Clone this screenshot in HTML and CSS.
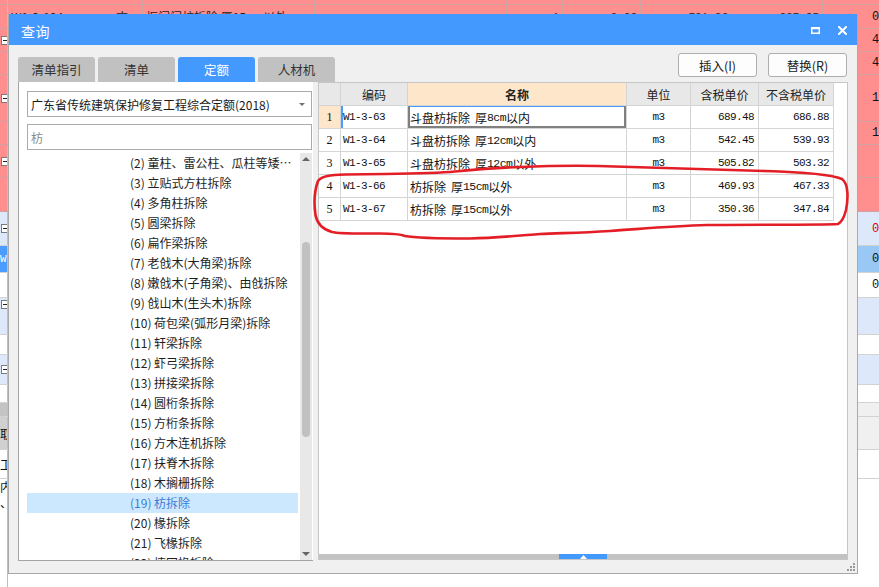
FILE: index.html
```html
<!DOCTYPE html>
<html lang="zh-CN">
<head>
<meta charset="utf-8">
<title>查询</title>
<link rel="stylesheet" href="styles.css">
</head>
<body>
<div class="sheet">
  <div class="srow pink h5"><div class="sl"></div><div class="sm cols"><span></span><span></span><span></span><span></span><span></span><span></span><span></span><span></span><span></span></div><div class="sr"></div></div>
  <div class="srow pink h24"><div class="sl"></div><div class="sm cols"><span class="t">W1-3-104</span><span class="t c">方</span><span class="t">框门门枋拆除 厚15cm以外</span><span></span><span class="t r">1</span><span class="t r">0.02</span><span class="t r">791.36</span><span class="t r">837.85</span><span></span></div><div class="sr">0</div></div>
  <div class="srow pink h23"><div class="sl"><i class="box"></i></div><div class="sm"></div><div class="sr">4</div></div>
  <div class="srow pink h23"><div class="sl"></div><div class="sm"></div><div class="sr">4</div></div>
  <div class="srow pink h47"><div class="sl"><i class="box"></i></div><div class="sm"></div><div class="sr">1</div></div>
  <div class="srow pink h23"><div class="sl"></div><div class="sm"></div><div class="sr">1</div></div>
  <div class="srow pink h33"><div class="sl"><i class="box"></i></div><div class="sm"></div><div class="sr"></div></div>
  <div class="srow pink h34"><div class="sl"></div><div class="sm"></div><div class="sr"></div></div>
  <div class="srow lb h34"><div class="sl"><i class="box"></i></div><div class="sm"></div><div class="sr red">0</div></div>
  <div class="srow wh h27"><div class="sl blue">W1</div><div class="sm"></div><div class="sr sel">0</div></div>
  <div class="srow wh h25"><div class="sl"></div><div class="sm"></div><div class="sr">0</div></div>
  <div class="srow lb h37"><div class="sl top"><i class="box"></i></div><div class="sm"></div><div class="sr"></div></div>
  <div class="srow wh h20"><div class="sl"></div><div class="sm"></div><div class="sr"></div></div>
  <div class="srow lb h30"><div class="sl"><i class="box"></i></div><div class="sm"></div><div class="sr"></div></div>
  <div class="srow wh h18"><div class="sl"></div><div class="sm"></div><div class="sr"></div></div>
  <div class="srow wh h14"><div class="sl dark"></div><div class="sm"></div><div class="sr light"></div></div>
  <div class="srow wh h33"><div class="sl gray">取</div><div class="sm"></div><div class="sr light"></div></div>
  <div class="srow wh h29"><div class="sl">工作</div><div class="sm"></div><div class="sr"></div></div>
  <div class="srow wh h108 last"><div class="sl stack"><span>内</span><span>、</span></div><div class="sm"></div><div class="sr"></div></div>
</div>

<div class="dialog">
  <div class="titlebar">
    <span class="title">查询</span>
    <div class="winbtns">
      <svg width="9" height="7" viewBox="0 0 9 7"><rect x="0.75" y="0.75" width="7.5" height="5.5" fill="none" stroke="#fff" stroke-width="1.5"/><rect x="0" y="0" width="9" height="2.2" fill="#fff"/></svg>
      <svg width="9" height="9" viewBox="0 0 9 9"><path d="M1 1L8 8M8 1L1 8" stroke="#fff" stroke-width="2" stroke-linecap="square"/></svg>
    </div>
  </div>
  <div class="dbody">
    <div class="toolbar">
      <div class="tabs">
        <div class="tab">清单指引</div>
        <div class="tab">清单</div>
        <div class="tab active">定额</div>
        <div class="tab">人材机</div>
      </div>
      <div class="btns">
        <button class="btn">插入(I)</button>
        <button class="btn">替换(R)</button>
      </div>
    </div>
    <div class="main">
      <div class="leftpanel">
        <div class="combo"><span>广东省传统建筑保护修复工程综合定额(2018)</span><i class="caret"></i></div>
        <div class="search">枋</div>
        <div class="tree">
          <ul class="items">
            <li>(2) 童柱、雷公柱、瓜柱等矮柱拆除</li>
            <li>(3) 立贴式方柱拆除</li>
            <li>(4) 多角柱拆除</li>
            <li>(5) 圆梁拆除</li>
            <li>(6) 扁作梁拆除</li>
            <li>(7) 老戗木(大角梁)拆除</li>
            <li>(8) 嫩戗木(子角梁)、由戗拆除</li>
            <li>(9) 戗山木(生头木)拆除</li>
            <li>(10) 荷包梁(弧形月梁)拆除</li>
            <li>(11) 轩梁拆除</li>
            <li>(12) 虾弓梁拆除</li>
            <li>(13) 拼接梁拆除</li>
            <li>(14) 圆桁条拆除</li>
            <li>(15) 方桁条拆除</li>
            <li>(16) 方木连机拆除</li>
            <li>(17) 扶脊木拆除</li>
            <li>(18) 木搁栅拆除</li>
            <li class="sel">(19) 枋拆除</li>
            <li>(20) 椽拆除</li>
            <li>(21) 飞椽拆除</li>
            <li>(22) 摔网椽拆除</li>
          </ul>
          <div class="vscroll">
            <div class="arrbox"><i class="arr up"></i></div>
            <div class="track"><div class="thumb"></div></div>
            <div class="arrbox"><i class="arr down"></i></div>
          </div>
        </div>
      </div>
      <div class="tablepanel">
        <div class="grid">
          <div class="c hd"></div>
          <div class="c hd ctr">编码</div>
          <div class="c hd ctr active">名称</div>
          <div class="c hd ctr">单位</div>
          <div class="c hd ctr">含税单价</div>
          <div class="c hd ctr">不含税单价</div>

          <div class="c rn cur">1</div>
          <div class="c code first">W1-3-63</div>
          <div class="c name focus">斗盘枋拆除<span class="sp"></span>厚<span class="m">8cm</span>以内</div>
          <div class="c ctr mono">m3</div>
          <div class="c num">689.48</div>
          <div class="c num">686.88</div>

          <div class="c rn">2</div>
          <div class="c code">W1-3-64</div>
          <div class="c name">斗盘枋拆除<span class="sp"></span>厚<span class="m">12cm</span>以内</div>
          <div class="c ctr mono">m3</div>
          <div class="c num">542.45</div>
          <div class="c num">539.93</div>

          <div class="c rn">3</div>
          <div class="c code">W1-3-65</div>
          <div class="c name">斗盘枋拆除<span class="sp"></span>厚<span class="m">12cm</span>以外</div>
          <div class="c ctr mono">m3</div>
          <div class="c num">505.82</div>
          <div class="c num">503.32</div>

          <div class="c rn">4</div>
          <div class="c code">W1-3-66</div>
          <div class="c name">枋拆除<span class="sp"></span>厚<span class="m">15cm</span>以外</div>
          <div class="c ctr mono">m3</div>
          <div class="c num">469.93</div>
          <div class="c num">467.33</div>

          <div class="c rn">5</div>
          <div class="c code">W1-3-67</div>
          <div class="c name">枋拆除<span class="sp"></span>厚<span class="m">15cm</span>以外</div>
          <div class="c ctr mono">m3</div>
          <div class="c num">350.36</div>
          <div class="c num">347.84</div>
        </div>
        <div class="fill"></div>
        <div class="hsplit"><div class="hthumb"><svg width="7" height="4" viewBox="0 0 7 4"><path d="M3.5 0L7 4H0Z" fill="#fff"/></svg></div></div>
      </div>
    </div>
    <div class="status">
      <svg class="grip" width="8" height="8" viewBox="0 0 8 8"><rect x="6" y="0" width="2" height="2" fill="#9a9a9a"/><rect x="3" y="3" width="2" height="2" fill="#9a9a9a"/><rect x="6" y="3" width="2" height="2" fill="#9a9a9a"/><rect x="0" y="6" width="2" height="2" fill="#9a9a9a"/><rect x="3" y="6" width="2" height="2" fill="#9a9a9a"/><rect x="6" y="6" width="2" height="2" fill="#9a9a9a"/></svg>
    </div>
  </div>
</div>

<svg class="annot" width="879" height="587" viewBox="0 0 879 587">
  <path d="M318 181 C322 176 330 175 345 174.5 L385 174 C420 173.5 440 173 455 171.5 C480 169 500 167.5 520 167 C545 166 570 165.5 598 166 C640 167 700 169.5 765 171 C800 172 830 174 842 179 C849 184 848 200 846 210 C844 218 842 222 838 224 C820 225 760 224.5 707 225 C670 226 640 229 610 231 C580 233 560 233 540 234 C515 236 495 238 470 238.5 C440 238.5 415 238 405 236 C400 234 395 233.5 380 233.5 C355 233.5 340 234 332 232 C322 229 317 224 315.5 215 C314 205 314 192 318 181" fill="none" stroke="#e41e26" stroke-width="2.6" stroke-linecap="round" stroke-linejoin="round"/>
</svg>
</body>
</html>
```

FILE: styles.css
```css
* { box-sizing: border-box; }
html, body { margin: 0; padding: 0; }
body {
  width: 879px;
  height: 587px;
  overflow: hidden;
  position: relative;
  background: #fff;
  font-family: "Noto Sans CJK SC", "Noto Sans", sans-serif;
  font-size: 12px;
  color: #1a1a1a;
}

/* ---------- background spreadsheet ---------- */
.sheet { display: flex; flex-direction: column; width: 879px; height: 587px; }
.srow { display: flex; flex: none; border-bottom: 1px solid #d2d2d2; }
.srow.pink { background: #ff8f8f; border-bottom-color: #d3a0a0; }
.srow.lb { background: #dde8fa; }
.srow.wh { background: #fff; }
.srow.last { border-bottom: 0; }
.h5 { height: 5px; } .h14 { height: 14px; } .h18 { height: 18px; } .h20 { height: 20px; }
.h23 { height: 23px; } .h24 { height: 24px; } .h25 { height: 25px; } .h27 { height: 27px; }
.h29 { height: 29px; } .h30 { height: 30px; } .h33 { height: 33px; } .h34 { height: 34px; }
.h37 { height: 37px; } .h47 { height: 47px; } .h108 { height: 108px; }

.sl {
  width: 8px; flex: none; overflow: hidden; white-space: nowrap;
  border-right: 1px solid #f2b56c;
  display: flex; align-items: center;
  font-size: 12px; color: #111;
}
.sl.top { align-items: flex-start; padding-top: 2px; }
.sl.blue { background: #4a9cff; color: #fff; font-family: "Liberation Mono", monospace; font-size: 11px; }
.sl.dark { background: #c4c4c4; }
.sl.gray { background: #d0d0d0; }
.sl.stack { flex-direction: column; align-items: flex-start; justify-content: flex-start; padding-top: 0; line-height: 16px; }
.box {
  display: block; flex: none; width: 9px; height: 9px; margin-left: 1px;
  border: 1px solid #7a7a7a; background: #fff; position: relative;
}
.box::after { content: ""; position: absolute; left: 1px; top: 3px; width: 5px; height: 1px; background: #222; }

.sm { flex: 1; }
.sm.cols { display: grid; grid-template-columns: 94px 41px 172px 192px 56px 78px 91px 91px 35px; }
.sm.cols > span { border-right: 1px solid #d3a0a0; overflow: hidden; white-space: nowrap; }
.sm .t { display: flex; align-items: center; padding: 0 3px; font-size: 12px; color: #222; }
.sm .t.c { justify-content: center; }
.sm .t.r { justify-content: flex-end; font-family: "Liberation Mono", monospace; font-size: 11px; }

.sr {
  width: 21px; flex: none; padding-left: 14px; overflow: hidden;
  display: flex; align-items: center;
  font-family: "Liberation Mono", monospace; font-size: 12px; color: #111;
}
.sr.red { color: #e00000; }
.sr.sel { background: #99c8f5; }
.sr.light { background: #f0f0f0; }

/* ---------- dialog ---------- */
.dialog {
  position: absolute; left: 8px; top: 14px;
  width: 850px; height: 560px;
  border: 1px solid #a9a9a9; border-top: 0;
  background: #f0f0f0;
  display: flex; flex-direction: column;
}
.titlebar {
  height: 31px; flex: none;
  background: #4499ff; color: #fff;
  display: flex; align-items: center; justify-content: space-between;
  padding: 0 10px 0 12px;
}
.title { font-size: 14px; padding-top: 3px; letter-spacing: 0.5px; }
.winbtns { display: flex; align-items: center; gap: 18px; padding-top: 1px; }
.winbtns svg { display: block; }

.dbody { flex: 1; display: flex; flex-direction: column; }
.toolbar {
  height: 37px; flex: none;
  display: flex; justify-content: space-between;
  padding: 0 10px 0 9px;
}
.tabs { display: flex; gap: 3px; align-self: flex-end; }
.tab {
  width: 77px; height: 25px; line-height: 25px;
  background: #c1c1c1; color: #333;
  border-radius: 3px 3px 0 0;
  text-align: center; font-size: 12.5px;
}
.tab.active { background: #4499ff; color: #fff; }
.btns { display: flex; gap: 11px; margin-top: 8px; }
.btn {
  width: 79px; height: 24px; padding: 0;
  background: #fdfdfd; border: 1px solid #adadad; border-radius: 3px;
  font-family: "Noto Sans CJK SC", "Noto Sans", sans-serif; font-size: 12.5px; color: #222;
}

.main { height: 479px; flex: none; display: flex; gap: 5px; padding-left: 9px; }

.leftpanel {
  width: 295px; height: 479px;
  background: #fff;
  border-left: 1px solid #a4a4a4; border-bottom: 1px solid #a4a4a4;
  padding: 9px 1px 0 8px;
}
.combo {
  height: 26px; border: 1px solid #ababab; background: #fff;
  display: flex; align-items: center; justify-content: space-between;
  padding: 0 6px 0 3px; font-size: 12px; color: #1a1a1a;
}
.caret { width: 0; height: 0; border-left: 3px solid transparent; border-right: 3px solid transparent; border-top: 3px solid #707070; }
.search {
  height: 26px; margin-top: 7px; border: 1px solid #ababab; background: #fff;
  display: flex; align-items: center; padding-left: 3px;
  font-size: 12px; color: #8a8a8a;
}
.tree { height: 407px; margin-top: 3px; display: flex; overflow: hidden; }
.items { list-style: none; margin: 0; padding: 0; width: 271px; flex: none; }
.items li {
  height: 20px; line-height: 20px;
  padding: 0 6px 0 103px;
  white-space: nowrap; overflow: hidden; text-overflow: ellipsis;
  color: #1e1e1e; font-size: 12px;
}
.items li.sel { background: #cce8ff; color: #3a7ad6; }
.vscroll { width: 12px; flex: none; margin-left: 2px; background: #e8e8e8; display: flex; flex-direction: column; }
.arrbox { height: 12px; flex: none; display: flex; align-items: center; justify-content: center; }
.arr { width: 0; height: 0; border-left: 4px solid transparent; border-right: 4px solid transparent; }
.arr.up { border-bottom: 4px solid #666; }
.arr.down { border-top: 4px solid #666; }
.track { flex: 1; padding: 77px 2px 0 2px; }
.thumb { height: 195px; background: #c1c1c1; border-radius: 4px; }

.tablepanel {
  width: 530px; height: 478px;
  background: #fff; border: 1px solid #c6c6c6;
  display: flex; flex-direction: column;
}
.grid {
  display: grid;
  grid-template-columns: 22px 67px 219px 64px 68px 75px;
  grid-auto-rows: 23px;
  width: 515px; flex: none;
}
.c {
  border-right: 1px solid #d4d4d4; border-bottom: 1px solid #d4d4d4;
  display: flex; align-items: center; overflow: hidden; white-space: nowrap;
  font-size: 12px; color: #111;
}
.hd { background: #e8e8e8; color: #222; }
.hd.active { background: #fde6c9; font-weight: 700; }
.ctr { justify-content: center; }
.rn { justify-content: center; font-family: "Liberation Serif", serif; font-size: 12px; }
.rn.cur { background: #fde6c9; }
.code, .num, .mono, .m { font-family: "Liberation Mono", monospace; font-size: 11px; letter-spacing: -0.6px; }
.code { padding-left: 2px; }
.code.first { box-shadow: inset 2px 0 0 #4a9cff; }
.num { justify-content: flex-end; padding-right: 4px; }
.name { padding-left: 2px; }
.name .sp { display: inline-block; width: 5px; }
.name .m { font-size: 11.5px; }
.name.focus { box-shadow: inset 2px 0 0 #808080, inset -2px 0 0 #808080, inset 0 -2px 0 #808080, inset 0 1px 0 #4a9cff; }

.fill { flex: 1; }
.hsplit { height: 5px; flex: none; background: #c3c3c3; display: flex; justify-content: center; }
.hthumb { width: 48px; height: 5px; background: #4499ff; display: flex; align-items: center; justify-content: center; }
.hthumb svg { display: block; }

.status { flex: 1; display: flex; justify-content: flex-end; align-items: flex-end; padding: 0 2px 2px 0; }
.grip { display: block; }

/* ---------- annotation overlay ---------- */
.annot { position: absolute; left: 0; top: 0; pointer-events: none; }
```
